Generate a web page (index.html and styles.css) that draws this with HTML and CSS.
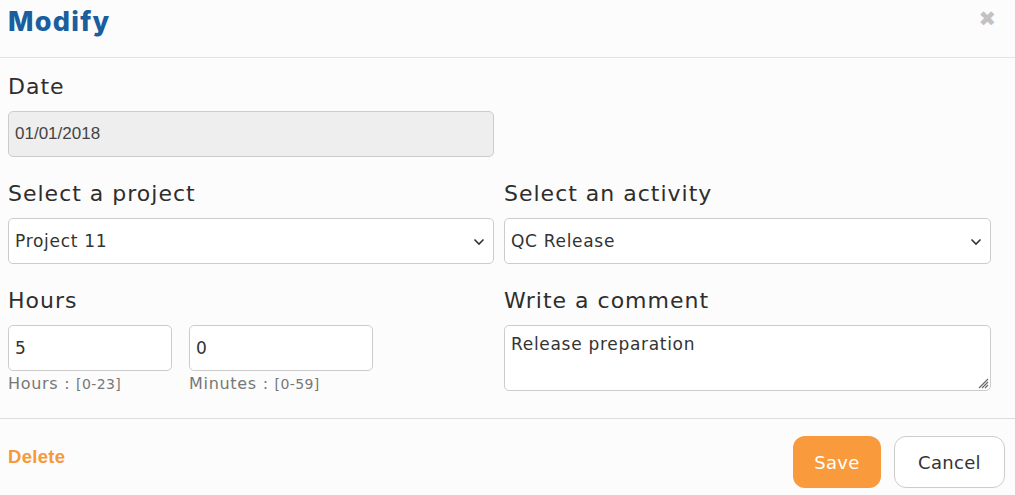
FILE: index.html
```html
<!DOCTYPE html>
<html>
<head>
<meta charset="utf-8">
<link rel="stylesheet" href="styles.css">
</head>
<body>
<div class="modal">
  <div class="header">
    <h1 class="title">Modify</h1>
    <span class="close">&#x2716;</span>
  </div>
  <div class="body">
    <div class="row">
      <div class="field">
        <label class="label">Date</label>
        <div class="input disabled">01/01/2018</div>
      </div>
    </div>
    <div class="row two">
      <div class="field">
        <label class="label">Select a project</label>
        <div class="input select"><span>Project 11</span>
          <svg class="chev" width="12" height="8" viewBox="0 0 12 8"><path d="M1.5 1.5 L6 6 L10.5 1.5" fill="none" stroke="#333" stroke-width="1.6"/></svg>
        </div>
      </div>
      <div class="field">
        <label class="label">Select an activity</label>
        <div class="input select"><span>QC Release</span>
          <svg class="chev" width="12" height="8" viewBox="0 0 12 8"><path d="M1.5 1.5 L6 6 L10.5 1.5" fill="none" stroke="#333" stroke-width="1.6"/></svg>
        </div>
      </div>
    </div>
    <div class="row two">
      <div class="field">
        <label class="label">Hours</label>
        <div class="time">
          <div class="tfield">
            <div class="input small">5</div>
            <div class="hint">Hours : <span class="range">[0-23]</span></div>
          </div>
          <div class="tfield">
            <div class="input small wide">0</div>
            <div class="hint">Minutes : <span class="range">[0-59]</span></div>
          </div>
        </div>
      </div>
      <div class="field">
        <label class="label">Write a comment</label>
        <div class="input textarea">Release preparation
          <svg class="grip" width="14" height="14" viewBox="0 0 14 14"><path d="M13 4 L4 13 M13 7 L7 13 M13 10 L10 13" stroke="#666" stroke-width="1.1"/></svg>
        </div>
      </div>
    </div>
  </div>
  <div class="footer">
    <a class="delete">Delete</a>
    <div class="buttons">
      <button class="btn save">Save</button>
      <button class="btn cancel">Cancel</button>
    </div>
  </div>
</div>
</body>
</html>
```
FILE: styles.css
```css
html, body {
  margin: 0;
  padding: 0;
  background: #fcfcfc;
}
.modal {
  width: 1015px;
  height: 495px;
  font-family: "DejaVu Sans", sans-serif;
  color: #333;
}
.header {
  height: 58px;
  border-bottom: 1px solid #dfe5ef;
  display: flex;
  justify-content: space-between;
  align-items: flex-start;
  padding: 0 19px 0 8px;
  box-sizing: border-box;
}
.title {
  margin: 5px 0 0 0;
  font-family: "Inter", sans-serif;
  font-weight: 800;
  font-size: 27px;
  letter-spacing: 1.3px;
  color: #1a5e9e;
}
.close {
  margin-top: 7px;
  color: #c2c2c2;
  font-size: 21px;
  font-family: "DejaVu Sans", sans-serif;
}
.body {
  padding: 14px 0 0 8px;
  height: 360px;
  box-sizing: border-box;
}
.row {
  display: grid;
  grid-template-columns: 486px;
  column-gap: 10px;
  margin-bottom: 22px;
}
.row.two {
  grid-template-columns: 486px 487px;
}
.field {
  display: flex;
  flex-direction: column;
}
.label {
  font-size: 22px;
  letter-spacing: 1px;
  line-height: 30px;
  color: #2e2e2e;
  margin-bottom: 9px;
}
.input {
  height: 46px;
  box-sizing: border-box;
  border: 1px solid #ccc;
  border-radius: 5px;
  background: #fff;
  font-size: 17px;
  letter-spacing: 0.7px;
  padding: 0 6px;
  display: flex;
  align-items: center;
  color: #333;
}
.disabled {
  background: #eee;
  font-family: "Liberation Sans", sans-serif;
  font-size: 17px;
  letter-spacing: 0;
  color: #444;
}
.select {
  justify-content: space-between;
  padding-right: 8px;
}
.chev { margin-top: 1px; }
.time {
  display: flex;
  gap: 17px;
}
.tfield {
  display: flex;
  flex-direction: column;
}
.input.small {
  width: 164px;
}
.input.small.wide {
  width: 184px;
}
.hint {
  font-size: 16px;
  letter-spacing: 0.7px;
  color: #777;
  line-height: 26px;
}
.range {
  font-size: 14px;
  letter-spacing: 0.4px;
}
.textarea {
  height: 66px;
  align-items: flex-start;
  padding-top: 8px;
  position: relative;
}
.grip {
  position: absolute;
  right: 1px;
  bottom: 1px;
}
.footer {
  border-top: 1px solid #ddd;
  height: 76px;
  display: flex;
  justify-content: space-between;
  align-items: center;
  padding: 0 10px 0 8px;
  box-sizing: border-box;
}
.delete {
  font-family: "Liberation Sans", sans-serif;
  font-weight: bold;
  font-size: 18.5px;
  letter-spacing: 0.3px;
  color: #f7983a;
  margin-top: 0;
}
.buttons {
  display: flex;
  gap: 13px;
  margin-top: 11px;
}
.btn {
  font-family: "DejaVu Sans", sans-serif;
  font-size: 18px;
  letter-spacing: 0.3px;
  border-radius: 12px;
  height: 52px;
  cursor: pointer;
}
.save {
  width: 88px;
  background: #f99a3d;
  color: #fff;
  border: none;
}
.cancel {
  width: 111px;
  background: #fff;
  color: #333;
  border: 1px solid #ccc;
}
```
